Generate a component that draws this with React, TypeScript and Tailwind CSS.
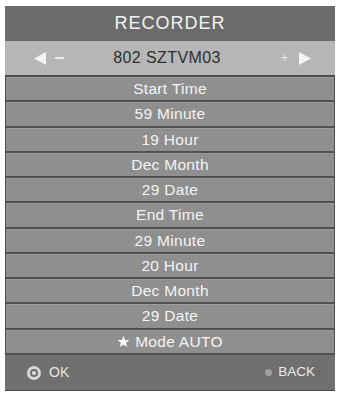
import React from "react";

const rows: { label: string; star?: boolean }[] = [
  { label: "Start Time" },
  { label: "59 Minute" },
  { label: "19 Hour" },
  { label: "Dec Month" },
  { label: "29 Date" },
  { label: "End Time" },
  { label: "29 Minute" },
  { label: "20 Hour" },
  { label: "Dec Month" },
  { label: "29 Date" },
  { label: "Mode AUTO", star: true },
];

export default function App() {
  return (
    <div
      className="w-[340px] h-[395px] bg-white pt-[6px] pl-[5px]"
      style={{ fontFamily: '"Liberation Sans", Arial, sans-serif' }}
    >
      <div className="w-[330px] flex flex-col">
        <div className="h-[35px] bg-[#6b6b6b] flex items-center justify-center text-[18px] tracking-[1px] text-[#f3f3f3]">
          RECORDER
        </div>
        <div className="h-[34px] bg-[#b6b6b6] flex items-center pl-[28px] pr-[23px]">
          <div className="flex items-center gap-[8px] w-[32px]">
            <svg width="14" height="15" viewBox="0 0 14 15">
              <polygon points="1,7.5 13,1 13,14" fill="#f4f4f4" />
            </svg>
            <div className="w-[9px] h-[1.5px] bg-[#e8e8e8]" />
          </div>
          <div className="flex-1 text-center pr-[11px] text-[16px] tracking-[0.4px] text-[#2e2e2e]">
            802 SZTVM03
          </div>
          <div className="flex items-center gap-[10px] w-[32px] justify-end">
            <span className="text-[12px] leading-none text-[#e8e8e8]">+</span>
            <svg width="14" height="15" viewBox="0 0 14 15">
              <polygon points="13,7.5 1,1 1,14" fill="#f4f4f4" />
            </svg>
          </div>
        </div>
        <div className="h-[280px] flex flex-col border-t-2 border-x border-[#4e4e4e]">
          {rows.map((r, i) => (
            <div
              key={i}
              className="flex-1 bg-[#8f8f8f] border-b-2 border-[#505050] flex items-center justify-center gap-[5px] text-[15.5px] tracking-[0.3px] text-[#f4f4f4] shadow-[inset_0_1px_0_#9c9c9c]"
            >
              {r.star && (
                <svg width="13" height="13" viewBox="0 0 24 24">
                  <polygon
                    points="12,1.5 15,9 23,9.3 16.8,14.3 19,22.3 12,17.8 5,22.3 7.2,14.3 1,9.3 9,9"
                    fill="#f6f6f6"
                  />
                </svg>
              )}
              <span>{r.label}</span>
            </div>
          ))}
        </div>
        <div className="h-[36px] bg-[#6f6f6f] border-b border-[#4a4a4a] flex items-center justify-between pl-[22px] pr-[20px] text-[14px] text-[#e6e6e6]">
          <div className="flex items-center gap-[8px]">
            <div className="w-[14px] h-[14px] rounded-full border-[3px] border-[#d8d8d8] flex items-center justify-center">
              <div className="w-[4px] h-[4px] rounded-full bg-[#e0e0e0]" />
            </div>
            <span>OK</span>
          </div>
          <div className="flex items-center gap-[6px]">
            <div className="w-[7px] h-[7px] rounded-full bg-[#a0a0a0]" />
            <span className="text-[13.5px] text-[#ececec]">BACK</span>
          </div>
        </div>
      </div>
    </div>
  );
}
